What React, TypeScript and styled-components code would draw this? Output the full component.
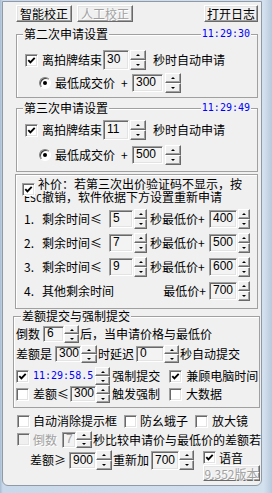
import React from 'react';
import styled, { createGlobalStyle, css } from 'styled-components';

const GlobalStyle = createGlobalStyle`
  html, body {
    margin: 0;
    padding: 0;
    background: #f0f0f0;
  }
  body {
    font-family: "Noto Sans CJK SC", "Noto Sans", sans-serif;
    font-size: 12px;
    color: #000;
  }
`;

const Screen = styled.div`
  width: 272px;
  height: 493px;
  overflow: hidden;
  background: linear-gradient(to right, #a9bcd2 0%, #c9d8ea 1%, #d3e0ee 97%, #b9c9dc 100%);
  display: flex;
  flex-direction: column;
`;

const Client = styled.div`
  margin: 1px 10px 0 2px;
  height: 485px;
  box-sizing: border-box;
  border: 1px solid #8f9aa6;
  border-radius: 0 0 6px 6px;
  background: #f0f0f0;
  display: flex;
  flex-direction: column;
`;

const TopBar = styled.div`
  display: flex;
  margin-top: 3px;
  padding: 0 3px 0 13px;
  height: 17px;
`;

const Spacer = styled.div`
  flex: 1;
`;

const Btn = styled.button<{ $w: number; $h?: number }>`
  flex: none;
  box-sizing: border-box;
  width: ${p => p.$w}px;
  height: ${p => p.$h ?? 17}px;
  margin: 0;
  padding: 0;
  font: 12px/13px "Noto Sans CJK SC", sans-serif;
  color: #000;
  background: #f0f0f0;
  border: 1px solid;
  border-color: #fff #696969 #696969 #fff;
  box-shadow: inset -1px -1px 0 #a0a0a0, inset 1px 1px 0 #e3e3e3;
  & + & {
    margin-left: 5px;
  }
  &:disabled {
    color: #a0a0a0;
    text-shadow: 1px 1px 0 #fff;
  }
`;

const Group = styled.div<{ $mt: number; $ml: number; $w: number; $h: number }>`
  flex: none;
  box-sizing: border-box;
  margin: ${p => p.$mt}px 0 0 ${p => p.$ml}px;
  width: ${p => p.$w}px;
  height: ${p => p.$h}px;
  border: 1px solid #a0a0a0;
  box-shadow: inset 1px 1px 0 #fff;
  display: flex;
  flex-direction: column;
`;

const GroupHead = styled.div<{ $ml: number }>`
  display: flex;
  justify-content: space-between;
  height: 12px;
  margin: -7px 6px 0 ${p => p.$ml}px;
  line-height: 12px;
`;

const GroupTitle = styled.span`
  background: #f0f0f0;
  padding: 0 1px;
`;

const Clock = styled.span<{ $ml?: number }>`
  flex: none;
  margin-left: ${p => p.$ml ?? 0}px;
  padding: 0 1px;
  background: #f0f0f0;
  color: #0000ff;
  font-family: "DejaVu Sans Mono", "Liberation Mono", monospace;
  font-size: 10px;
  line-height: 12px;
`;

const Row = styled.div<{ $mt: number; $h: number; $pl?: number }>`
  display: flex;
  align-items: center;
  flex: none;
  height: ${p => p.$h}px;
  margin-top: ${p => p.$mt}px;
  padding-left: ${p => p.$pl ?? 0}px;
`;

const Text = styled.span<{ $ml?: number; $w?: number; $right?: boolean; $muted?: boolean }>`
  flex: none;
  margin-left: ${p => p.$ml ?? 0}px;
  ${p => p.$w !== undefined && css`width: ${p.$w}px;`}
  text-align: ${p => (p.$right ? 'right' : 'left')};
  line-height: 14px;
  white-space: nowrap;
  color: ${p => (p.$muted ? '#a0a0a0' : '#000')};
  ${p => p.$muted && css`text-shadow: 1px 1px 0 #fff;`}
`;

const Ascii = styled.span`
  font-family: "DejaVu Sans Mono", "Liberation Mono", monospace;
  font-size: 10px;
`;

const Field = styled.div<{ $ml?: number; $w: number; $h: number; $disabled?: boolean }>`
  flex: none;
  box-sizing: border-box;
  margin-left: ${p => p.$ml ?? 0}px;
  width: ${p => p.$w}px;
  height: ${p => p.$h}px;
  padding-left: 3px;
  border: 1px solid;
  border-color: #a0a0a0 #fff #fff #a0a0a0;
  box-shadow: inset 1px 1px 0 #696969, inset -1px -1px 0 #e3e3e3;
  background: #f3f3f3;
  font-family: "Liberation Sans", Arial, sans-serif;
  font-size: 12px;
  line-height: ${p => p.$h - 3}px;
  color: ${p => (p.$disabled ? '#a0a0a0' : '#000')};
  overflow: hidden;
`;

const SpinBox = styled.div<{ $ml?: number; $w: number; $h: number }>`
  flex: none;
  display: flex;
  flex-direction: column;
  margin-left: ${p => p.$ml ?? 0}px;
  width: ${p => p.$w}px;
  height: ${p => p.$h}px;
`;

const SpinBtn = styled.div`
  flex: 1;
  min-height: 0;
  box-sizing: border-box;
  background: #f0f0f0;
  border: 1px solid;
  border-color: #fff #696969 #696969 #fff;
  box-shadow: inset -1px -1px 0 #a0a0a0;
  display: flex;
  align-items: center;
  justify-content: center;
`;

const Arrow = styled.span<{ $down?: boolean }>`
  width: 0;
  height: 0;
  border-left: 2px solid transparent;
  border-right: 2px solid transparent;
  ${p => (p.$down ? 'border-top' : 'border-bottom')}: 2px solid #000;
`;

const CheckBox = styled.span<{ $ml?: number; $disabled?: boolean }>`
  flex: none;
  box-sizing: border-box;
  width: 13px;
  height: 13px;
  margin-left: ${p => p.$ml ?? 0}px;
  border: 1px solid;
  border-color: #a0a0a0 #fff #fff #a0a0a0;
  box-shadow: inset 1px 1px 0 #696969, inset -1px -1px 0 #e3e3e3;
  background: ${p => (p.$disabled ? '#f0f0f0' : '#fff')};
  display: flex;
  align-items: center;
  justify-content: center;
`;

const RadioRing = styled.span<{ $ml?: number }>`
  flex: none;
  box-sizing: border-box;
  width: 12px;
  height: 12px;
  margin-left: ${p => p.$ml ?? 0}px;
  border-radius: 50%;
  border: 1px solid;
  border-color: #808080 #fff #fff #808080;
  box-shadow: inset 1px 1px 0 #404040;
  background: #fff;
  display: flex;
  align-items: center;
  justify-content: center;
  &::after {
    content: '';
    width: 4px;
    height: 4px;
    border-radius: 50%;
    background: #000;
  }
`;

const Intro = styled.div`
  position: relative;
  flex: none;
  margin: 2px 0 0 8px;
  height: 26px;
  line-height: 13px;
  text-indent: 14px;
  white-space: nowrap;
`;

const IntroCheck = styled.span`
  position: absolute;
  left: -2px;
  top: 6px;
  text-indent: 0;
`;

const BottomRow = styled.div`
  display: flex;
  align-items: flex-start;
  margin-top: 2px;
  padding-left: 27px;
`;

const VoiceColumn = styled.div`
  display: flex;
  flex-direction: column;
  margin-left: 9px;
`;

const VoiceRow = styled.div`
  display: flex;
  align-items: center;
  height: 15px;
`;

function Spin({ ml, w, h }: { ml?: number; w: number; h: number }) {
  return (
    <SpinBox $ml={ml} $w={w} $h={h}>
      <SpinBtn><Arrow /></SpinBtn>
      <SpinBtn><Arrow $down /></SpinBtn>
    </SpinBox>
  );
}

function Check({ ml, on, disabled }: { ml?: number; on?: boolean; disabled?: boolean }) {
  return (
    <CheckBox $ml={ml} $disabled={disabled}>
      {on && (
        <svg width="9" height="9" viewBox="0 0 9 9">
          <path d="M1.3 4.2 L3.4 6.4 L7.7 1.8" fill="none" stroke="#000" strokeWidth="1.9" />
        </svg>
      )}
    </CheckBox>
  );
}

function ApplyGroup({ mt, title, time, first, second }: { mt: number; title: string; time: string; first: string; second: string }) {
  return (
    <Group $mt={mt} $ml={13} $w={242} $h={64}>
      <GroupHead $ml={6}>
        <GroupTitle>{title}</GroupTitle>
        <Clock>{time}</Clock>
      </GroupHead>
      <Row $mt={mt === 12 ? 10 : 6} $h={20} $pl={8}>
        <Check on />
        <Text $ml={4}>离拍牌结束</Text>
        <Field $ml={1} $w={26} $h={20}>{first}</Field>
        <Spin ml={1} w={16} h={20} />
        <Text $ml={7}>秒时自动申请</Text>
      </Row>
      <Row $mt={mt === 12 ? 3 : 5} $h={20} $pl={22}>
        <RadioRing />
        <Text $ml={4}>最低成交价</Text>
        <Text $ml={6} $w={7}>+</Text>
        <Field $ml={4} $w={31} $h={18}>{second}</Field>
        <Spin ml={2} w={16} h={20} />
      </Row>
    </Group>
  );
}

const steps = [
  { n: '1.', sec: '5', price: '400' },
  { n: '2.', sec: '7', price: '500' },
  { n: '3.', sec: '9', price: '600' },
];

const App: React.FC = () => {
  return (
    <>
      <GlobalStyle />
      <Screen>
        <Client>
          <TopBar>
            <Btn $w={56}>智能校正</Btn>
            <Btn $w={56} disabled>人工校正</Btn>
            <Spacer />
            <Btn $w={54}>打开日志</Btn>
          </TopBar>

          <ApplyGroup mt={12} title="第二次申请设置" time="11:29:30" first="30" second="300" />
          <ApplyGroup mt={10} title="第三次申请设置" time="11:29:49" first="11" second="500" />

          <Group $mt={2} $ml={12} $w={243} $h={135}>
            <Intro>
              <IntroCheck><Check on /></IntroCheck>
              补价：若第三次出价验证码不显示，按<br />
              <Ascii>ESC</Ascii>撤销，软件依据下方设置重新申请
            </Intro>
            {steps.map((s, i) => (
              <Row key={s.n} $mt={i === 0 ? 6 : 4} $h={20} $pl={8}>
                <Text $w={18}>{s.n}</Text>
                <Text $w={66}>剩余时间≤</Text>
                <Field $ml={1} $w={24} $h={18}>{s.sec}</Field>
                <Spin ml={1} w={13} h={20} />
                <Text $ml={3} $w={56}>秒最低价+</Text>
                <Field $ml={3} $w={28} $h={18}>{s.price}</Field>
                <Spin ml={1} w={12} h={20} />
              </Row>
            ))}
            <Row $mt={4} $h={20} $pl={8}>
              <Text $w={18}>4.</Text>
              <Text $w={72}>其他剩余时间</Text>
              <Text $w={92} $right>最低价+</Text>
              <Field $ml={3} $w={28} $h={18}>700</Field>
              <Spin ml={1} w={12} h={20} />
            </Row>
          </Group>

          <Group $mt={7} $ml={10} $w={247} $h={92}>
            <GroupHead $ml={7}>
              <GroupTitle>差额提交与强制提交</GroupTitle>
            </GroupHead>
            <Row $mt={3} $h={18} $pl={2}>
              <Text $w={24}>倒数</Text>
              <Field $ml={3} $w={21} $h={16}>6</Field>
              <Spin w={15} h={18} />
              <Text $ml={1}>后，当申请价格与最低价</Text>
            </Row>
            <Row $mt={2} $h={18} $pl={2}>
              <Text $w={36}>差额是</Text>
              <Field $ml={3} $w={26} $h={16}>300</Field>
              <Spin w={16} h={18} />
              <Text $ml={1} $w={36}>时延迟</Text>
              <Field $ml={2} $w={28} $h={16}>0</Field>
              <Spin w={15} h={18} />
              <Text $ml={1}>秒自动提交</Text>
            </Row>
            <Row $mt={4} $h={18} $pl={2}>
              <Check on />
              <Clock $ml={3}>11:29:58.5</Clock>
              <Spin ml={1} w={15} h={18} />
              <Text $ml={2} $w={48}>强制提交</Text>
              <Check ml={9} on />
              <Text $ml={4}>兼顾电脑时间</Text>
            </Row>
            <Row $mt={0} $h={18} $pl={2}>
              <Check />
              <Text $ml={4} $w={36}>差额≤</Text>
              <Field $ml={1} $w={26} $h={16}>300</Field>
              <Spin w={14} h={18} />
              <Text $ml={2} $w={48}>触发强制</Text>
              <Check ml={9} />
              <Text $ml={4}>大数据</Text>
            </Row>
          </Group>

          <Row $mt={6} $h={14} $pl={14}>
            <Check />
            <Text $ml={3} $w={84}>自动消除提示框</Text>
            <Check ml={7} />
            <Text $ml={3} $w={48}>防幺蛾子</Text>
            <Check ml={7} />
            <Text $ml={4}>放大镜</Text>
          </Row>
          <Row $mt={3} $h={17} $pl={14}>
            <Check disabled />
            <Text $ml={3} $w={24} $muted>倒数</Text>
            <Field $ml={5} $w={14} $h={16} $disabled>7</Field>
            <Spin w={16} h={17} />
            <Text $ml={1}>秒比较申请价与最低价的差额若</Text>
          </Row>
          <BottomRow>
            <Row $mt={0} $h={20}>
              <Text $w={37}>差额≥</Text>
              <Field $ml={2} $w={27} $h={17}>900</Field>
              <Spin w={16} h={20} />
              <Text $ml={1} $w={36}>重新加</Text>
              <Field $ml={2} $w={28} $h={19}>700</Field>
              <Spin w={15} h={20} />
            </Row>
            <VoiceColumn>
              <VoiceRow>
                <Check on />
                <Text $ml={3}>语音</Text>
              </VoiceRow>
              <Btn $w={57} $h={16} disabled>9.352版本</Btn>
            </VoiceColumn>
          </BottomRow>
        </Client>
      </Screen>
    </>
  );
};

export default App;
